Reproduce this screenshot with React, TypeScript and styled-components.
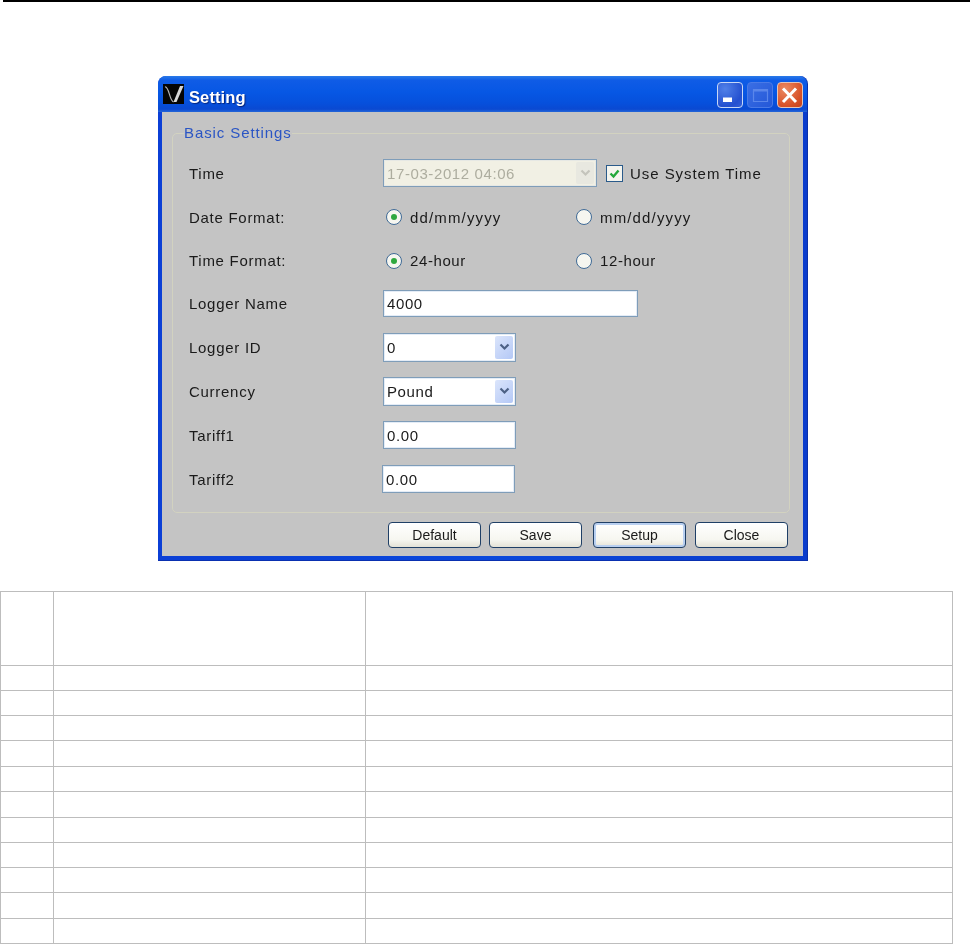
import React from "react";
import styled, { createGlobalStyle } from "styled-components";

const Global = createGlobalStyle`
  html, body { margin: 0; padding: 0; background: #fff; }
  body { font-family: "Liberation Sans", Arial, sans-serif; }
`;

const Page = styled.div`
  width: 970px;
  height: 944px;
  overflow: hidden;
`;

const TopRule = styled.div`
  height: 2px;
  margin-left: 3px;
  background: #000;
`;

const Window = styled.section`
  width: 650px;
  height: 485px;
  margin: 74px 0 0 158px;
  box-sizing: border-box;
  display: flex;
  flex-direction: column;
  background: linear-gradient(90deg, #0b3fd6 0, #0a48dc 50%, #0a3ccc 100%);
  border-radius: 8px 8px 0 0;
  border-right: 1px solid #0a2fa8;
  border-bottom: 1px solid #0a30b0;
  filter: blur(0.6px);
`;

const TitleBar = styled.header`
  height: 36px;
  flex: none;
  box-sizing: border-box;
  display: flex;
  align-items: center;
  padding: 0 4px 0 5px;
  border-radius: 8px 8px 0 0;
  background: linear-gradient(180deg, #2a7ae8 0, #0f5ce6 12%, #0757e4 45%, #0650dc 75%, #0a49d2 92%, #2466d8 100%);
`;

const TitleIcon = styled.svg`
  width: 21px;
  height: 20px;
  flex: none;
  display: block;
`;

const TitleText = styled.h1`
  margin: 6px 0 0 5px;
  flex: 1;
  font-size: 16.5px;
  line-height: 20px;
  font-weight: 700;
  letter-spacing: 0.1px;
  color: #fff;
  text-shadow: 1px 1px 1px #06247c;
`;

const CaptionButton = styled.div<{ $tone: "blue" | "off" | "red" }>`
  width: 26px;
  height: 26px;
  margin: 2px 0 0 4px;
  box-sizing: border-box;
  border-radius: 4px;
  display: flex;
  align-items: center;
  justify-content: center;
  border: 1px solid
    ${(p) => (p.$tone === "blue" ? "#c8d8f6" : p.$tone === "off" ? "#4a7ae6" : "#e4c4b8")};
  background: ${(p) =>
    p.$tone === "blue"
      ? "radial-gradient(circle at 30% 25%, #5080e8, #2450d0 70%, #3460d8)"
      : p.$tone === "off"
      ? "linear-gradient(135deg, #3a6ee4, #2458d8)"
      : "radial-gradient(circle at 30% 25%, #ec8a62, #d8532a 65%, #c2401c)"};
`;

const Client = styled.div`
  flex: 1;
  margin: 0 4px 4px 4px;
  background: #c4c4c4;
  display: flex;
  flex-direction: column;
`;

const Group = styled.fieldset`
  height: 388px;
  margin: 13px 13px 0 10px;
  padding: 10px 16px 0 16px;
  box-sizing: border-box;
  border: 1px solid #d2d2c0;
  border-radius: 5px;
  min-width: 0;
`;

const Legend = styled.legend`
  margin-left: -5px;
  padding: 0;
  font-size: 15px;
  line-height: 16px;
  letter-spacing: 0.9px;
  color: #2a55c4;
`;

const Form = styled.div`
  display: grid;
  grid-template-columns: 194px 1fr;
  grid-template-rows: 44px 44px 43px 43px 44px 44px 44px 44px;
  align-items: center;
`;

const Label = styled.div<{ $wide?: boolean }>`
  font-size: 15px;
  letter-spacing: ${(p) => (p.$wide ? "0.95px" : "0.72px")};
  color: #1a1a1a;
`;

const Cell = styled.div<{ $shift?: number }>`
  display: flex;
  align-items: center;
  margin-left: ${(p) => p.$shift ?? 0}px;
`;

const Field = styled.div<{ $w: number; $h: number; $disabled?: boolean }>`
  width: ${(p) => p.$w}px;
  height: ${(p) => p.$h}px;
  box-sizing: border-box;
  display: flex;
  align-items: center;
  padding-left: 3px;
  border: 1px solid #7f9db9;
  box-shadow: inset 0 0 0 1px ${(p) => (p.$disabled ? "#e6e8e4" : "#e4ecf6")};
  background: ${(p) => (p.$disabled ? "#f1f0e4" : "#fff")};
  color: ${(p) => (p.$disabled ? "#adad9f" : "#1a1a1a")};
  font-size: 15px;
  letter-spacing: 0.6px;
  white-space: nowrap;
`;

const FieldValue = styled.span`
  flex: 1;
`;

const DropButton = styled.span<{ $disabled?: boolean }>`
  width: 18px;
  height: calc(100% - 4px);
  margin-right: 2px;
  flex: none;
  display: flex;
  align-items: center;
  justify-content: center;
  border-radius: 2px;
  background: ${(p) =>
    p.$disabled ? "#e8e8e0" : "linear-gradient(135deg, #dbe5fb, #b4c8f6)"};
  color: ${(p) => (p.$disabled ? "#c4c4bc" : "#4d6185")};
`;

const Check = styled.span`
  width: 17px;
  height: 17px;
  margin: 0 7px 0 9px;
  box-sizing: border-box;
  border: 1px solid #2a5a8a;
  background: #f4f4ee;
  display: flex;
  align-items: center;
  justify-content: center;
  color: #22a83a;
`;

const Option = styled.div<{ $w: number; $spread?: boolean }>`
  width: ${(p) => p.$w}px;
  display: flex;
  align-items: center;
  font-size: 15px;
  letter-spacing: ${(p) => (p.$spread ? "1.15px" : "0.6px")};
  color: #1a1a1a;
`;

const Radio = styled.span<{ $on?: boolean }>`
  width: 16px;
  height: 16px;
  margin-right: 8px;
  flex: none;
  box-sizing: border-box;
  border-radius: 50%;
  border: 1px solid #3f6a96;
  background: #f6f6f0;
  display: flex;
  align-items: center;
  justify-content: center;
  &::after {
    content: "";
    width: 6px;
    height: 6px;
    border-radius: 50%;
    background: ${(p) => (p.$on ? "#2fa83f" : "transparent")};
  }
`;

const Footer = styled.div`
  display: flex;
  justify-content: flex-end;
  margin: 9px 15px 0 0;
`;

const Button = styled.button<{ $ml: number; $focus?: boolean }>`
  width: 93px;
  height: 26px;
  margin-left: ${(p) => p.$ml}px;
  padding: 0;
  box-sizing: border-box;
  border: 1px solid #1f3f66;
  border-radius: 4px;
  background: linear-gradient(180deg, #fff 0, #f6f6f0 70%, #e4e2d6 100%);
  box-shadow: ${(p) => (p.$focus ? "inset 0 0 0 2px #b8cff0" : "none")};
  font: 14px "Liberation Sans", Arial, sans-serif;
  letter-spacing: 0;
  color: #1a1a1a;
`;

const Table = styled.table`
  width: 953px;
  margin-top: 30px;
  margin-left: 0;
  table-layout: fixed;
  border-collapse: collapse;
`;

const Row = styled.tr<{ $h: number }>`
  height: ${(p) => p.$h}px;
`;

const Cellb = styled.td`
  padding: 0;
  border: 1px solid #bdbdbd;
`;

const ColNo = styled.col`
  width: 53px;
`;
const ColName = styled.col`
  width: 312px;
`;

const Chevron = () => (
  <svg width="11" height="8" viewBox="0 0 11 8">
    <path d="M1.5 1.5 5.5 5.5 9.5 1.5" fill="none" stroke="currentColor" strokeWidth="2.2" />
  </svg>
);

const rowHeights = [74, 25, 25, 25, 26, 25, 26, 25, 25, 25, 26, 25];

export default function App() {
  return (
    <Page>
      <Global />
      <TopRule />
      <Window>
        <TitleBar>
          <TitleIcon viewBox="0 0 21 20">
            <rect width="21" height="20" fill="#050505" />
            <path d="M2 3C6 2 6.500 17 10.500 18" fill="none" stroke="#b4b4b4" strokeWidth="1.2" />
            <path d="M10.500 18 13.500 18 20.500 2 17 2Z" fill="#d8d8d8" />
          </TitleIcon>
          <TitleText>Setting</TitleText>
          <CaptionButton $tone="blue">
            <svg width="24" height="24" viewBox="0 0 24 24">
              <rect x="5" y="14.500" width="9" height="4.500" fill="#fff" />
            </svg>
          </CaptionButton>
          <CaptionButton $tone="off">
            <svg width="24" height="24" viewBox="0 0 24 24">
              <path d="M5.500 6.500h14v12h-14z" fill="none" stroke="#5a86ea" strokeWidth="1.2" />
              <path d="M5 6h15v2.500H5z" fill="#5a86ea" />
            </svg>
          </CaptionButton>
          <CaptionButton $tone="red">
            <svg width="24" height="24" viewBox="0 0 24 24">
              <path d="M5 5.500 18 19M18 5.500 5 19" stroke="#fff" strokeWidth="3" />
            </svg>
          </CaptionButton>
        </TitleBar>
        <Client>
          <Group>
            <Legend>Basic Settings</Legend>
            <Form>
              <Label>Time</Label>
              <Cell>
                <Field $w={214} $h={28} $disabled>
                  <FieldValue>17-03-2012 04:06</FieldValue>
                  <DropButton $disabled>
                    <Chevron />
                  </DropButton>
                </Field>
                <Check>
                  <svg width="13" height="13" viewBox="0 0 13 13">
                    <path d="M2.500 6.500 5.500 9.500 10.500 3.500" fill="none" stroke="currentColor" strokeWidth="2.4" />
                  </svg>
                </Check>
                <Label $wide>Use System Time</Label>
              </Cell>

              <Label>Date Format:</Label>
              <Cell $shift={3}>
                <Option $w={190} $spread>
                  <Radio $on />
                  dd/mm/yyyy
                </Option>
                <Option $w={190} $spread>
                  <Radio />
                  mm/dd/yyyy
                </Option>
              </Cell>

              <Label>Time Format:</Label>
              <Cell $shift={3}>
                <Option $w={190}>
                  <Radio $on />
                  24-hour
                </Option>
                <Option $w={190}>
                  <Radio />
                  12-hour
                </Option>
              </Cell>

              <Label>Logger Name</Label>
              <Cell>
                <Field $w={255} $h={27}>4000</Field>
              </Cell>

              <Label>Logger ID</Label>
              <Cell>
                <Field $w={133} $h={29}>
                  <FieldValue>0</FieldValue>
                  <DropButton>
                    <Chevron />
                  </DropButton>
                </Field>
              </Cell>

              <Label>Currency</Label>
              <Cell>
                <Field $w={133} $h={29}>
                  <FieldValue>Pound</FieldValue>
                  <DropButton>
                    <Chevron />
                  </DropButton>
                </Field>
              </Cell>

              <Label>Tariff1</Label>
              <Cell>
                <Field $w={133} $h={28}>0.00</Field>
              </Cell>

              <Label>Tariff2</Label>
              <Cell $shift={-1}>
                <Field $w={133} $h={28}>0.00</Field>
              </Cell>
            </Form>
          </Group>
          <Footer>
            <Button $ml={0}>Default</Button>
            <Button $ml={8}>Save</Button>
            <Button $ml={11} $focus>Setup</Button>
            <Button $ml={9}>Close</Button>
          </Footer>
        </Client>
      </Window>
      <Table>
        <colgroup>
          <ColNo />
          <ColName />
          <col />
        </colgroup>
        <tbody>
          {rowHeights.map((h, i) => (
            <Row key={i} $h={h}>
              <Cellb />
              <Cellb />
              <Cellb />
            </Row>
          ))}
        </tbody>
      </Table>
    </Page>
  );
}
